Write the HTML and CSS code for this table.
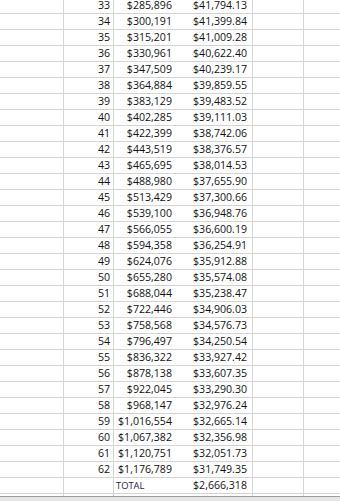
FILE: index.html
```html
<!DOCTYPE html>
<html>
<head>
<meta charset="utf-8">
<link rel="stylesheet" href="styles.css">
</head>
<body>
<div class="sheet">
  <div class="rows">
    <div class="row"><div class="c a"></div><div class="c b">33</div><div class="c cc">$285,896</div><div class="c d">$41,794.13</div><div class="c e"></div><div class="c f"></div></div>
    <div class="row"><div class="c a"></div><div class="c b">34</div><div class="c cc">$300,191</div><div class="c d">$41,399.84</div><div class="c e"></div><div class="c f"></div></div>
    <div class="row"><div class="c a"></div><div class="c b">35</div><div class="c cc">$315,201</div><div class="c d">$41,009.28</div><div class="c e"></div><div class="c f"></div></div>
    <div class="row"><div class="c a"></div><div class="c b">36</div><div class="c cc">$330,961</div><div class="c d">$40,622.40</div><div class="c e"></div><div class="c f"></div></div>
    <div class="row"><div class="c a"></div><div class="c b">37</div><div class="c cc">$347,509</div><div class="c d">$40,239.17</div><div class="c e"></div><div class="c f"></div></div>
    <div class="row"><div class="c a"></div><div class="c b">38</div><div class="c cc">$364,884</div><div class="c d">$39,859.55</div><div class="c e"></div><div class="c f"></div></div>
    <div class="row"><div class="c a"></div><div class="c b">39</div><div class="c cc">$383,129</div><div class="c d">$39,483.52</div><div class="c e"></div><div class="c f"></div></div>
    <div class="row"><div class="c a"></div><div class="c b">40</div><div class="c cc">$402,285</div><div class="c d">$39,111.03</div><div class="c e"></div><div class="c f"></div></div>
    <div class="row"><div class="c a"></div><div class="c b">41</div><div class="c cc">$422,399</div><div class="c d">$38,742.06</div><div class="c e"></div><div class="c f"></div></div>
    <div class="row"><div class="c a"></div><div class="c b">42</div><div class="c cc">$443,519</div><div class="c d">$38,376.57</div><div class="c e"></div><div class="c f"></div></div>
    <div class="row"><div class="c a"></div><div class="c b">43</div><div class="c cc">$465,695</div><div class="c d">$38,014.53</div><div class="c e"></div><div class="c f"></div></div>
    <div class="row"><div class="c a"></div><div class="c b">44</div><div class="c cc">$488,980</div><div class="c d">$37,655.90</div><div class="c e"></div><div class="c f"></div></div>
    <div class="row"><div class="c a"></div><div class="c b">45</div><div class="c cc">$513,429</div><div class="c d">$37,300.66</div><div class="c e"></div><div class="c f"></div></div>
    <div class="row"><div class="c a"></div><div class="c b">46</div><div class="c cc">$539,100</div><div class="c d">$36,948.76</div><div class="c e"></div><div class="c f"></div></div>
    <div class="row"><div class="c a"></div><div class="c b">47</div><div class="c cc">$566,055</div><div class="c d">$36,600.19</div><div class="c e"></div><div class="c f"></div></div>
    <div class="row"><div class="c a"></div><div class="c b">48</div><div class="c cc">$594,358</div><div class="c d">$36,254.91</div><div class="c e"></div><div class="c f"></div></div>
    <div class="row"><div class="c a"></div><div class="c b">49</div><div class="c cc">$624,076</div><div class="c d">$35,912.88</div><div class="c e"></div><div class="c f"></div></div>
    <div class="row"><div class="c a"></div><div class="c b">50</div><div class="c cc">$655,280</div><div class="c d">$35,574.08</div><div class="c e"></div><div class="c f"></div></div>
    <div class="row"><div class="c a"></div><div class="c b">51</div><div class="c cc">$688,044</div><div class="c d">$35,238.47</div><div class="c e"></div><div class="c f"></div></div>
    <div class="row"><div class="c a"></div><div class="c b">52</div><div class="c cc">$722,446</div><div class="c d">$34,906.03</div><div class="c e"></div><div class="c f"></div></div>
    <div class="row"><div class="c a"></div><div class="c b">53</div><div class="c cc">$758,568</div><div class="c d">$34,576.73</div><div class="c e"></div><div class="c f"></div></div>
    <div class="row"><div class="c a"></div><div class="c b">54</div><div class="c cc">$796,497</div><div class="c d">$34,250.54</div><div class="c e"></div><div class="c f"></div></div>
    <div class="row"><div class="c a"></div><div class="c b">55</div><div class="c cc">$836,322</div><div class="c d">$33,927.42</div><div class="c e"></div><div class="c f"></div></div>
    <div class="row"><div class="c a"></div><div class="c b">56</div><div class="c cc">$878,138</div><div class="c d">$33,607.35</div><div class="c e"></div><div class="c f"></div></div>
    <div class="row"><div class="c a"></div><div class="c b">57</div><div class="c cc">$922,045</div><div class="c d">$33,290.30</div><div class="c e"></div><div class="c f"></div></div>
    <div class="row"><div class="c a"></div><div class="c b">58</div><div class="c cc">$968,147</div><div class="c d">$32,976.24</div><div class="c e"></div><div class="c f"></div></div>
    <div class="row"><div class="c a"></div><div class="c b">59</div><div class="c cc">$1,016,554</div><div class="c d">$32,665.14</div><div class="c e"></div><div class="c f"></div></div>
    <div class="row"><div class="c a"></div><div class="c b">60</div><div class="c cc">$1,067,382</div><div class="c d">$32,356.98</div><div class="c e"></div><div class="c f"></div></div>
    <div class="row"><div class="c a"></div><div class="c b">61</div><div class="c cc">$1,120,751</div><div class="c d">$32,051.73</div><div class="c e"></div><div class="c f"></div></div>
    <div class="row"><div class="c a"></div><div class="c b">62</div><div class="c cc">$1,176,789</div><div class="c d">$31,749.35</div><div class="c e"></div><div class="c f"></div></div>
    <div class="row"><div class="c a"></div><div class="c b"></div><div class="c cc total">TOTAL</div><div class="c d">$2,666,318</div><div class="c e"></div><div class="c f"></div></div>
    <div class="row"><div class="c a"></div><div class="c b"></div><div class="c cc"></div><div class="c d"></div><div class="c e"></div><div class="c f"></div></div>
  </div>
</div>
<div class="statusbar"></div>
</body>
</html>
```
FILE: styles.css
```css
html, body {
  margin: 0;
  padding: 0;
  background: #ffffff;
}
body {
  width: 340px;
  height: 501px;
  overflow: hidden;
  display: flex;
  flex-direction: column;
  font-family: "Open Sans", "Liberation Sans", sans-serif;
  font-size: 10.6px;
  color: #111111;
}
.sheet {
  height: 496px;
  overflow: hidden;
  flex: none;
}
.rows {
  margin-top: -2px;
}
.row {
  display: grid;
  grid-template-columns: 64px 50px 63px 76px 51px 1fr;
  height: 16px;
  box-sizing: border-box;
  border-bottom: 1px solid #d4d4d4;
}
.c {
  box-sizing: border-box;
  height: 15px;
  line-height: 15px;
  white-space: nowrap;
  overflow: hidden;
}
.a, .b, .d, .e {
  border-right: 1px solid #d4d4d4;
}
.b {
  text-align: right;
  padding-right: 3px;
}
.cc {
  text-align: right;
  padding-right: 5px;
}
.d {
  text-align: right;
  padding-right: 5px;
}
.total {
  text-align: left;
  padding-left: 2px;
  font-size: 9.4px;
  color: #24164e;
}
.statusbar {
  flex: none;
  height: 4px;
  border-top: 1px solid #9e9e9e;
  background: #e6e6e6;
}
```
